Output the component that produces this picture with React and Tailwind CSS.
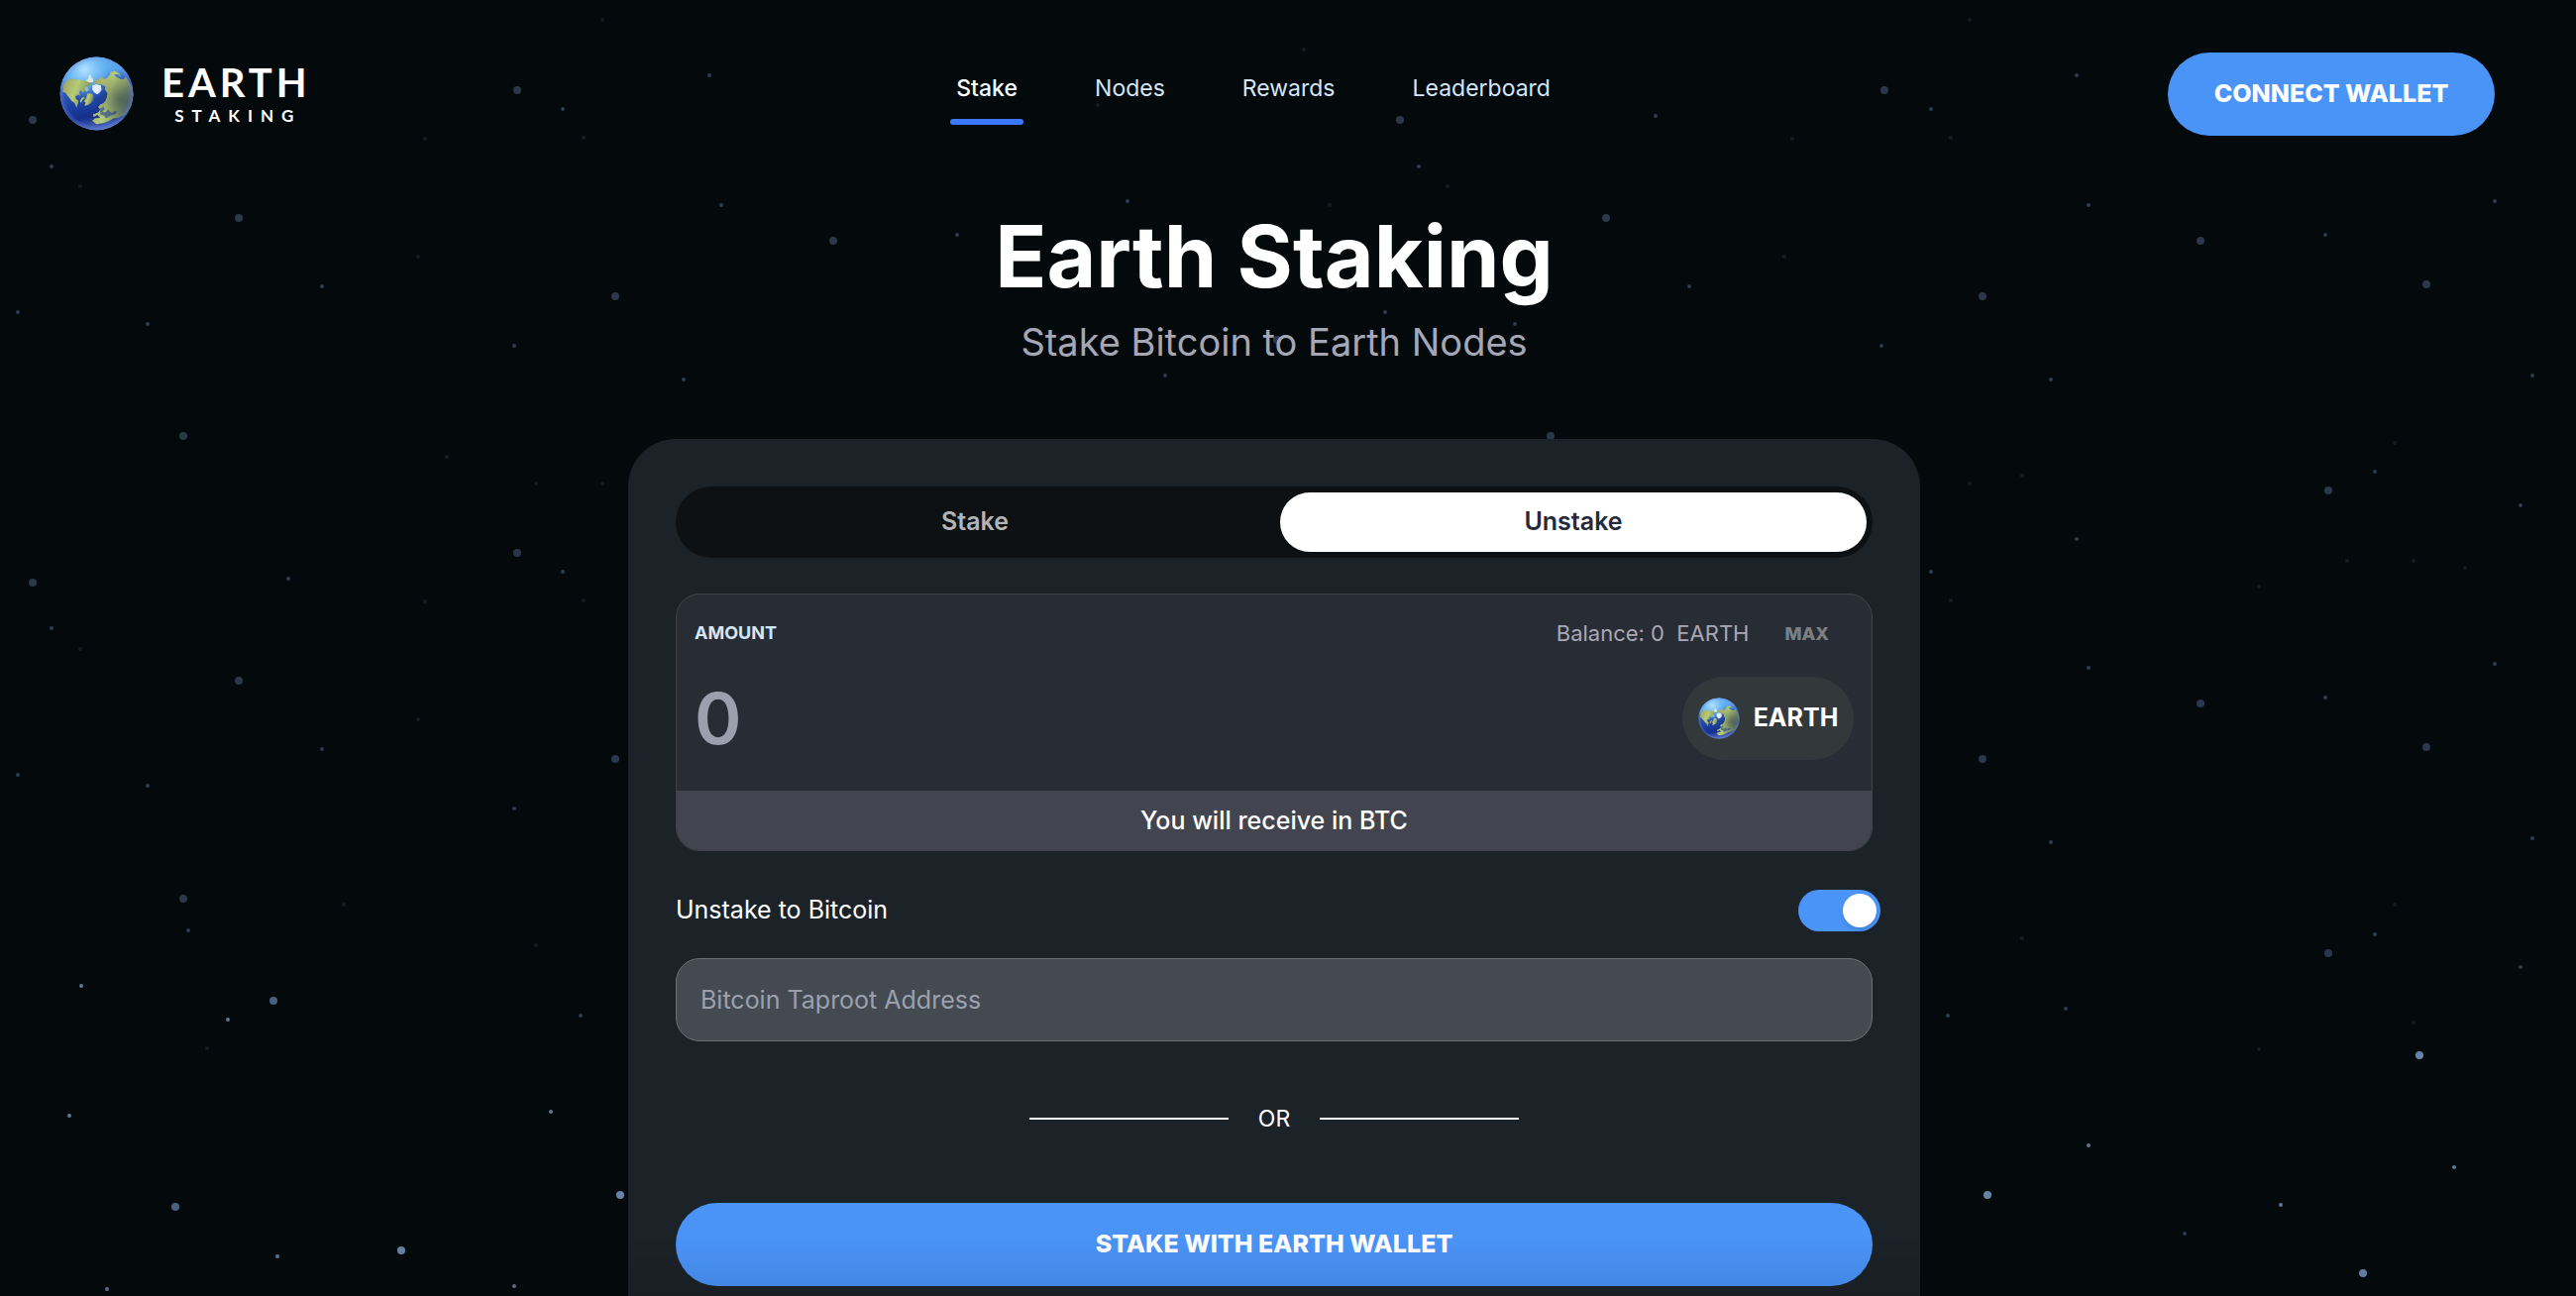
import { useId, useState } from "react";

const STARS = {
  bigDim: [
    [33, 121], [522, 91], [241, 220], [621, 299], [185, 440], [841, 243], [1289, 343], [1413, 121],
    [1621, 220], [1902, 91], [1565, 440], [2221, 243], [2001, 299], [2449, 287], [522, 558], [33, 588],
    [241, 687], [621, 766], [185, 907], [2350, 495], [2221, 710], [2001, 766], [2449, 754], [2350, 962],
  ],
  bigMid: [[276, 1010], [177, 1218]],
  bigBright: [[626, 1206], [405, 1262], [2442, 1065], [2006, 1206], [2385, 1285]],
  smallMid: [
    [52, 168], [568, 110], [325, 289], [18, 315], [149, 327], [519, 349], [716, 76], [728, 207], [966, 237],
    [690, 383], [1138, 203], [1176, 379], [1671, 117], [1398, 315], [1529, 327], [2096, 76], [2108, 207],
    [2347, 237], [2518, 203], [2070, 383], [2556, 379], [1949, 110], [1705, 289], [1899, 349], [1432, 168],
    [568, 577], [291, 584], [52, 634], [325, 756], [18, 782], [149, 793], [519, 816], [190, 939], [586, 1025],
    [2397, 476], [2544, 510], [2096, 544], [2518, 670], [2347, 704], [2108, 674], [2070, 850], [2556, 846],
    [2397, 943], [2544, 976], [1966, 1025], [2085, 1018], [2205, 1245], [1949, 577],
  ],
  smallBright: [
    [82, 995], [230, 1029], [70, 1126], [556, 1122], [280, 1268], [108, 1301], [519, 1298], [2108, 1156],
    [2477, 1178], [2302, 1216],
  ],
  smallDim: [
    [608, 20], [429, 140], [589, 139], [81, 188], [422, 259], [1108, 106], [989, 99], [1316, 50], [1342, 207],
    [1988, 20], [1969, 139], [1801, 259], [1461, 188], [1809, 140], [451, 461], [541, 488], [608, 488], [589, 606],
    [429, 607], [81, 655], [422, 726], [347, 913], [541, 954], [209, 1058], [2417, 447], [2041, 480],
    [1988, 488], [2369, 566], [2436, 566], [2488, 573], [2280, 592], [1969, 606], [2417, 913], [2041, 947],
    [2436, 1032], [2280, 1059],
  ],
};

const STAR_STYLE = {
  bigDim: [4, "#2a384a"],
  bigMid: [4, "#4a6080"],
  bigBright: [4, "#6684a9"],
  smallMid: [2, "#2d3c4e"],
  smallBright: [2, "#5c7898"],
  smallDim: [2, "#161b24"],
};

function Starfield() {
  return (
    <svg className="pointer-events-none absolute inset-0" width="2600" height="1308" aria-hidden="true">
      {Object.entries(STARS).map(([kind, points]) =>
        points.map(([x, y]) => (
          <circle key={`${kind}-${x}-${y}`} cx={x} cy={y} r={STAR_STYLE[kind][0]} fill={STAR_STYLE[kind][1]} />
        ))
      )}
    </svg>
  );
}

function Globe({ className }) {
  const id = useId();
  return (
    <svg viewBox="60 50 226 226" className={className} aria-hidden="true">
      <defs>
        <linearGradient id={`${id}sea`} x1="0.4" y1="0" x2="0.6" y2="1">
          <stop offset="0" stopColor="#5fb2f2" />
          <stop offset="0.22" stopColor="#5aa8ee" />
          <stop offset="0.42" stopColor="#2956b6" />
          <stop offset="0.78" stopColor="#142f8c" />
          <stop offset="1" stopColor="#5a76c8" />
        </linearGradient>
        <radialGradient id={`${id}shine`} cx="0.34" cy="0.18" r="0.4">
          <stop offset="0" stopColor="#b5e2ff" />
          <stop offset="0.6" stopColor="#74c0f8" stopOpacity="0.6" />
          <stop offset="1" stopColor="#5aa8f0" stopOpacity="0" />
        </radialGradient>
        <linearGradient id={`${id}land`} x1="0" y1="0.3" x2="1" y2="0.7">
          <stop offset="0" stopColor="#a3a866" />
          <stop offset="0.4" stopColor="#b6cb76" />
          <stop offset="0.65" stopColor="#98ab68" />
          <stop offset="1" stopColor="#46617a" />
        </linearGradient>
        <radialGradient id={`${id}edge`} cx="0.5" cy="0.5" r="0.5">
          <stop offset="0.86" stopColor="#6c8ae0" stopOpacity="0" />
          <stop offset="1" stopColor="#6c8ae0" stopOpacity="0.5" />
        </radialGradient>
        <radialGradient id={`${id}shade`} cx="0.82" cy="0.58" r="0.34">
          <stop offset="0" stopColor="#14264a" stopOpacity="0.5" />
          <stop offset="1" stopColor="#14264a" stopOpacity="0" />
        </radialGradient>
        <clipPath id={`${id}clip`}>
          <circle cx="173" cy="163" r="112" />
        </clipPath>
      </defs>
      <g clipPath={`url(#${id}clip)`}>
        <circle cx="173" cy="163" r="112" fill={`url(#${id}sea)`} />
        <circle cx="173" cy="163" r="112" fill={`url(#${id}shine)`} />
        <g fill={`url(#${id}land)`}>
          <path d="M70 158L72 136L80 125L90 119L100 117L108 120L122 121L132 124L142 123L148 127L160 130L156 136L146 140L142 148L136 150L134 160L128 157L124 152L120 160L124 170L116 166L108 172L111 180L118 184L116 194L112 206L106 192L98 186L92 178L84 168L78 160Z" />
          <path d="M144 164L152 162L160 164L164 172L164 182L156 192L146 198L136 200L140 190L134 186L142 176Z" />
          <path d="M126 178L134 172L138 178L130 182L126 192L122 186Z" />
          <path d="M163 128L176 120L186 114L196 110L190 118L202 118L212 108L216 97L228 94L242 102L246 112L238 104L226 104L230 110L244 118L254 120L262 112L270 124L280 142L286 168L280 200L262 226L240 236L224 238L214 244L196 252L172 256L160 246L168 238L184 236L176 228L164 234L162 226L178 220L184 212L178 204L184 196L194 192L200 184L204 174L206 162L198 150L200 142L190 136L178 134L170 132Z" />
        </g>
        <path d="M184 208L194 202L198 210L190 218L200 220L208 212L218 222L230 214L236 220L226 228L214 230L202 238L196 230L184 226Z" fill="#2c4c9c" opacity="0.65" />
        <path d="M140 124L148 118L150 106L156 108L158 116L163 118L162 128L152 130Z" fill="#dbe8da" />
        <path d="M160 138L172 134L186 138L188 150L184 158L176 165L166 160L160 150Z" fill="#e6edfb" />
        <path d="M138 142L146 144L150 152L142 158L136 152Z" fill="#8fc0b4" />
        <circle cx="173" cy="163" r="112" fill={`url(#${id}shade)`} />
        <circle cx="173" cy="163" r="112" fill={`url(#${id}edge)`} />
      </g>
    </svg>
  );
}

const NAV = ["Stake", "Nodes", "Rewards", "Leaderboard"];

function Header() {
  return (
    <header className="flex h-[190px] items-start justify-between pl-[60px] pr-[54px]">
      <a href="#home" className="mt-[57px] flex w-[282px] items-center gap-7" aria-label="Earth Staking">
        <Globe className="size-[75px]" />
        <span className="flex flex-col items-center font-['Lato'] font-bold text-white">
          <span className="-mr-[4px] text-[40px] leading-[44px] tracking-[4px]">EARTH</span>
          <span className="-mr-[8px] text-[17px] leading-[24px] tracking-[8px]">STAKING</span>
        </span>
      </a>
      <nav className="mt-[64px] flex gap-[78px]">
        {NAV.map((item, i) => (
          <a
            key={item}
            href={`#${item.toLowerCase()}`}
            className={
              i === 0
                ? "-mx-[6px] flex flex-col items-center text-[23px] leading-[50px] font-medium text-white"
                : "flex flex-col items-center text-[23px] leading-[50px] text-[#d3e6fb]"
            }
          >
            {item}
            {i === 0 && <span className="mt-[6px] h-[6px] w-[74px] rounded-full bg-[#3b78fa]" />}
          </a>
        ))}
      </nav>
      <button
        type="button"
        className="mt-[53px] h-[84px] w-[330px] rounded-full bg-[#4a94f8] text-[25px] font-extrabold text-white"
      >
        CONNECT WALLET
      </button>
    </header>
  );
}

function Tabs({ tab, onChange }) {
  const base = "h-[60px] flex-1 rounded-full text-[25px] font-semibold";
  return (
    <div role="tablist" className="flex h-[72px] gap-3 rounded-full bg-[#0d1113] p-[6px]">
      {["Stake", "Unstake"].map((name) => (
        <button
          key={name}
          type="button"
          role="tab"
          aria-selected={tab === name}
          onClick={() => onChange(name)}
          className={tab === name ? `${base} bg-white text-[#232a3d]` : `${base} text-[#b3b4b5]`}
        >
          {name}
        </button>
      ))}
    </div>
  );
}

function AmountBox() {
  return (
    <section className="mt-9 overflow-hidden rounded-[24px] border border-[#40434b] bg-[#282c34]">
      <div className="flex h-[198px] flex-col px-[18px] pt-[20px]">
        <div className="flex items-center justify-between">
          <label htmlFor="amount" className="text-[18px] leading-[38px] font-bold text-[#d3e6fb]">
            AMOUNT
          </label>
          <div className="flex items-center gap-9 pr-[25px]">
            <span className="text-[22px] leading-[38px] whitespace-pre text-[#aaa8b6]">{"Balance: 0  EARTH"}</span>
            <button type="button" className="text-[18px] font-extrabold text-[#7c8083]">
              MAX
            </button>
          </div>
        </div>
        <div className="mt-[25px] flex h-[84px] items-center justify-between">
          <input
            id="amount"
            type="text"
            inputMode="decimal"
            placeholder="0"
            className="h-[84px] min-w-0 flex-1 bg-transparent text-[72px] font-semibold text-white outline-none placeholder:text-[#9ca0ae]"
          />
          <button
            type="button"
            className="flex h-[84px] w-[173px] items-center justify-center gap-[14px] rounded-full bg-[#33383b] text-[25px] font-bold text-white"
          >
            <Globe className="size-[42px]" />
            EARTH
          </button>
        </div>
      </div>
      <p className="bg-[#42454f] text-center text-[25px] leading-[60px] font-medium text-white">
        You will receive in BTC
      </p>
    </section>
  );
}

function Toggle({ checked, onChange }) {
  return (
    <div className="-mr-2 flex h-[42px] items-center justify-between">
      <label htmlFor="to-bitcoin" className="text-[25px] text-white">
        Unstake to Bitcoin
      </label>
      <input
        id="to-bitcoin"
        type="checkbox"
        role="switch"
        checked={checked}
        onChange={(e) => onChange(e.target.checked)}
        className="flex h-[42px] w-[83px] appearance-none items-center rounded-full bg-[#3a4048] px-1 before:size-[34px] before:rounded-full before:bg-white before:shadow-md checked:justify-end checked:bg-[#4a94f8]"
      />
    </div>
  );
}

export default function App() {
  const [tab, setTab] = useState("Unstake");
  const [toBitcoin, setToBitcoin] = useState(true);

  return (
    <div className="relative h-screen overflow-hidden bg-[#040a0c] pr-[28px] font-['Inter',sans-serif]">
      <Starfield />
      <div className="relative">
        <Header />
        <main>
          <div className="flex flex-col items-center">
            <h1 className="mt-[9px] text-[86px] leading-[120px] font-bold text-white">Earth Staking</h1>
            <p className="text-[38px] leading-[52px] text-[#a5a6b6]">Stake Bitcoin to Earth Nodes</p>
          </div>
          <div className="mx-auto mt-[72px] w-full max-w-[1304px] rounded-t-[48px] bg-[#1b2228] px-12 pt-12 pb-24">
            <Tabs tab={tab} onChange={setTab} />
            <AmountBox />
            <div className="mt-[39px]">
              <Toggle checked={toBitcoin} onChange={setToBitcoin} />
            </div>
            <input
              type="text"
              aria-label="Bitcoin Taproot Address"
              placeholder="Bitcoin Taproot Address"
              className="mt-[27px] block h-[84px] w-full rounded-[24px] border border-[#6c6f78] bg-[#444a51] px-6 text-[25px] text-white outline-none placeholder:text-[#9ca0ae]"
            />
            <div className="mt-[58px] flex items-center justify-center gap-[30px] text-[23px] leading-[40px] text-white">
              <span className="h-[2px] w-[201px] bg-white" />
              OR
              <span className="h-[2px] w-[201px] bg-white" />
            </div>
            <button
              type="button"
              className="mt-[65px] h-[84px] w-full rounded-full bg-[#4a94f8] text-[25px] font-extrabold text-white"
            >
              STAKE WITH EARTH WALLET
            </button>
          </div>
        </main>
      </div>
      <div className="pointer-events-none absolute inset-x-0 bottom-0 h-16 bg-linear-to-b from-transparent to-black/10" />
    </div>
  );
}
